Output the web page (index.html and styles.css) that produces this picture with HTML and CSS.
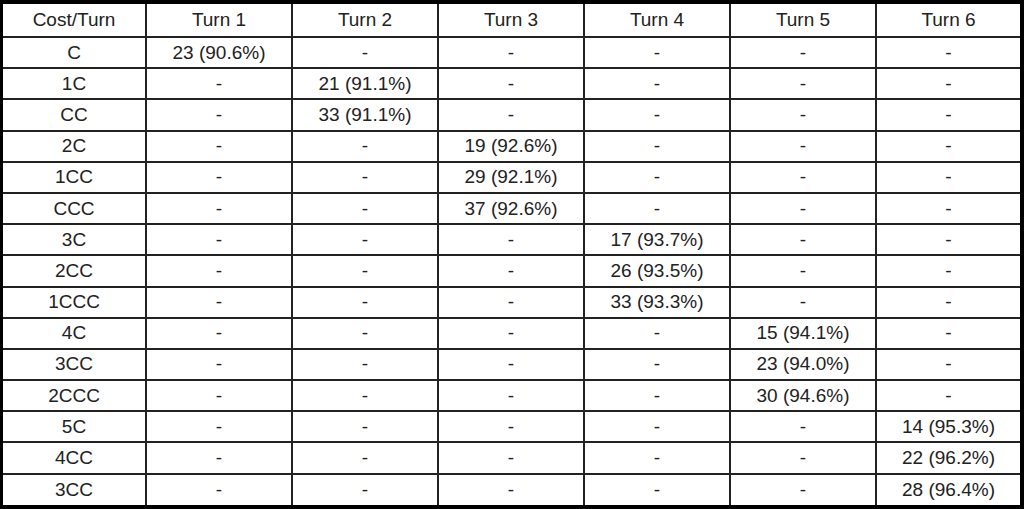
FILE: index.html
```html
<!DOCTYPE html>
<html>
<head>
<meta charset="utf-8">
<link rel="stylesheet" href="styles.css">
</head>
<body>
<div class="frame">
<table class="grid">
<colgroup>
<col class="c-first"><col class="c-mid"><col class="c-mid"><col class="c-mid"><col class="c-mid"><col class="c-mid"><col class="c-last">
</colgroup>
<thead>
<tr><th>Cost/Turn</th><th>Turn 1</th><th>Turn 2</th><th>Turn 3</th><th>Turn 4</th><th>Turn 5</th><th>Turn 6</th></tr>
</thead>
<tbody>
<tr><td>C</td><td>23 (90.6%)</td><td>-</td><td>-</td><td>-</td><td>-</td><td>-</td></tr>
<tr><td>1C</td><td>-</td><td>21 (91.1%)</td><td>-</td><td>-</td><td>-</td><td>-</td></tr>
<tr><td>CC</td><td>-</td><td>33 (91.1%)</td><td>-</td><td>-</td><td>-</td><td>-</td></tr>
<tr><td>2C</td><td>-</td><td>-</td><td>19 (92.6%)</td><td>-</td><td>-</td><td>-</td></tr>
<tr><td>1CC</td><td>-</td><td>-</td><td>29 (92.1%)</td><td>-</td><td>-</td><td>-</td></tr>
<tr><td>CCC</td><td>-</td><td>-</td><td>37 (92.6%)</td><td>-</td><td>-</td><td>-</td></tr>
<tr><td>3C</td><td>-</td><td>-</td><td>-</td><td>17 (93.7%)</td><td>-</td><td>-</td></tr>
<tr><td>2CC</td><td>-</td><td>-</td><td>-</td><td>26 (93.5%)</td><td>-</td><td>-</td></tr>
<tr><td>1CCC</td><td>-</td><td>-</td><td>-</td><td>33 (93.3%)</td><td>-</td><td>-</td></tr>
<tr><td>4C</td><td>-</td><td>-</td><td>-</td><td>-</td><td>15 (94.1%)</td><td>-</td></tr>
<tr><td>3CC</td><td>-</td><td>-</td><td>-</td><td>-</td><td>23 (94.0%)</td><td>-</td></tr>
<tr><td>2CCC</td><td>-</td><td>-</td><td>-</td><td>-</td><td>30 (94.6%)</td><td>-</td></tr>
<tr><td>5C</td><td>-</td><td>-</td><td>-</td><td>-</td><td>-</td><td>14 (95.3%)</td></tr>
<tr><td>4CC</td><td>-</td><td>-</td><td>-</td><td>-</td><td>-</td><td>22 (96.2%)</td></tr>
<tr><td>3CC</td><td>-</td><td>-</td><td>-</td><td>-</td><td>-</td><td>28 (96.4%)</td></tr>
</tbody>
</table>
</div>
</body>
</html>
```

FILE: styles.css
```css
html, body {
  margin: 0;
  padding: 0;
  background: #fff;
}
.frame {
  box-sizing: border-box;
  width: 1024px;
  height: 509px;
  border-style: solid;
  border-color: #000;
  border-width: 4px 4px 4px 3px;
  background: #fff;
}
.grid {
  width: 1017px;
  border-collapse: collapse;
  table-layout: fixed;
  font-family: "Liberation Sans", Arial, sans-serif;
  font-size: 19px;
  color: #222;
}
.c-first { width: 143px; }
.c-mid { width: 146px; }
.c-last { width: 144px; }
.grid thead tr {
  height: 33px;
}
.grid tbody tr {
  height: 31.2px;
}
.grid th,
.grid td {
  border: 2px solid #222;
  text-align: center;
  vertical-align: middle;
  padding: 0;
  font-weight: normal;
  line-height: 22px;
}
.grid thead th {
  border-top: 0;
}
.grid tr > :first-child {
  border-left: 0;
}
.grid tr > :last-child {
  border-right: 0;
}
.grid tbody tr:last-child td {
  border-bottom: 0;
}
```
